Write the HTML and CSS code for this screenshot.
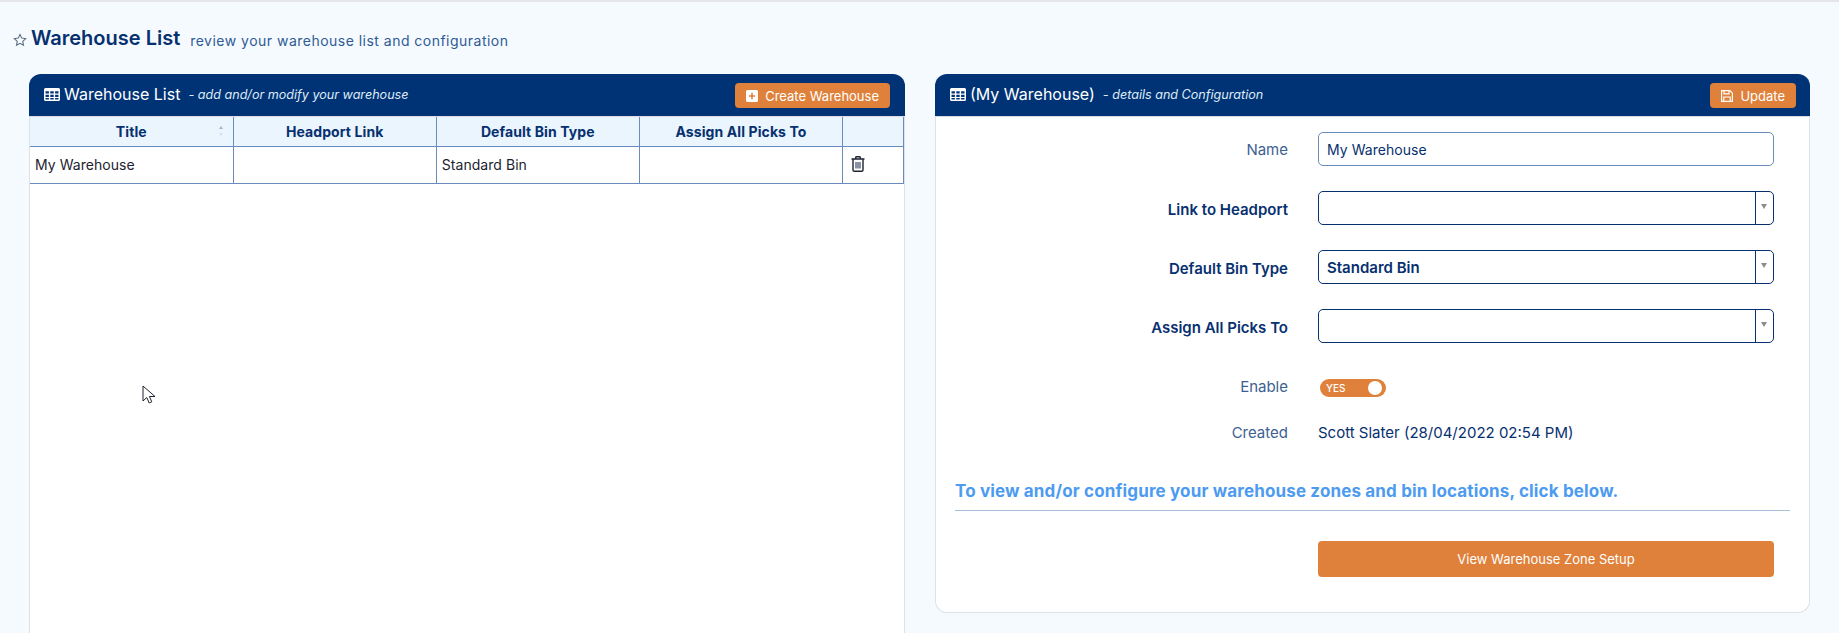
FILE: index.html
```html
<!DOCTYPE html>
<html lang="en">
<head>
<meta charset="utf-8">
<title>Warehouse List</title>
<link rel="stylesheet" href="styles.css">
</head>
<body>
<div class="page">
  <header class="page-head">
    <svg class="star" viewBox="0 0 24 24" aria-hidden="true"><path d="M12 2.6l2.9 6.2 6.8.8-5 4.7 1.3 6.8-6-3.4-6 3.4 1.3-6.8-5-4.7 6.8-.8z"/></svg>
    <h1>Warehouse List</h1>
    <p>review your warehouse list and configuration</p>
  </header>
  <main class="columns">
    <section class="panel panel-list">
      <div class="panel-head">
        <div class="panel-title">
          <svg class="grid-icon" viewBox="0 0 16 13" aria-hidden="true"><path fill-rule="evenodd" d="M1.5 0h13A1.5 1.5 0 0 1 16 1.5v10a1.5 1.5 0 0 1-1.5 1.5h-13A1.5 1.5 0 0 1 0 11.5v-10A1.5 1.5 0 0 1 1.5 0zM1.5 3.2v2.2h3.4V3.2zm4.8 0v2.2h3.4V3.2zm4.8 0v2.2h3.4V3.2zM1.5 6.7v2.2h3.4V6.7zm4.8 0v2.2h3.4V6.7zm4.8 0v2.2h3.4V6.7zM1.5 10.1v1.4h3.4v-1.4zm4.8 0v1.4h3.4v-1.4zm4.8 0v1.4h3.4v-1.4z"/></svg>
          <span class="title-main">Warehouse List</span>
          <em class="sub-text">- add and/or modify your warehouse</em>
        </div>
        <button class="btn" type="button">
          <svg class="btn-icon" viewBox="0 0 12 12" aria-hidden="true"><path fill-rule="evenodd" d="M1.5 0h9A1.5 1.5 0 0 1 12 1.5v9a1.5 1.5 0 0 1-1.5 1.5h-9A1.5 1.5 0 0 1 0 10.5v-9A1.5 1.5 0 0 1 1.5 0zM5.2 2.8v2.4H2.8v1.6h2.4v2.4h1.6V6.8h2.4V5.2H6.8V2.8z"/></svg>
          Create Warehouse
        </button>
      </div>
      <table class="grid">
        <thead>
          <tr>
            <th class="sortable">Title<span class="sort"></span></th>
            <th>Headport Link</th>
            <th>Default Bin Type</th>
            <th>Assign All Picks To</th>
            <th class="col-action"></th>
          </tr>
        </thead>
        <tbody>
          <tr>
            <td>My Warehouse</td>
            <td></td>
            <td>Standard Bin</td>
            <td></td>
            <td class="col-action">
              <svg class="trash" viewBox="0 0 14 16" aria-hidden="true"><path d="M.5 3h13M4.7 3V1.5A1 1 0 0 1 5.7.7h2.6a1 1 0 0 1 1 .8V3M2 3v11a1.3 1.3 0 0 0 1.3 1.3h7.4A1.3 1.3 0 0 0 12 14V3"/><path class="trash-bars" d="M5 6v6.5M7 6v6.5M9 6v6.5"/></svg>
            </td>
          </tr>
        </tbody>
      </table>
      <svg class="cursor" viewBox="0 0 14 20" aria-hidden="true"><path d="M1 1v15l3.8-3.5 2.4 5.5 2.6-1.2-2.4-5.3H13z"/></svg>
    </section>

    <section class="panel panel-detail">
      <div class="panel-head">
        <div class="panel-title">
          <svg class="grid-icon" viewBox="0 0 16 13" aria-hidden="true"><path fill-rule="evenodd" d="M1.5 0h13A1.5 1.5 0 0 1 16 1.5v10a1.5 1.5 0 0 1-1.5 1.5h-13A1.5 1.5 0 0 1 0 11.5v-10A1.5 1.5 0 0 1 1.5 0zM1.5 3.2v2.2h3.4V3.2zm4.8 0v2.2h3.4V3.2zm4.8 0v2.2h3.4V3.2zM1.5 6.7v2.2h3.4V6.7zm4.8 0v2.2h3.4V6.7zm4.8 0v2.2h3.4V6.7zM1.5 10.1v1.4h3.4v-1.4zm4.8 0v1.4h3.4v-1.4zm4.8 0v1.4h3.4v-1.4z"/></svg>
          <span class="title-main">(My Warehouse)</span>
          <em class="sub-text">- details and Configuration</em>
        </div>
        <button class="btn" type="button">
          <svg class="btn-icon save" viewBox="0 0 12 12" aria-hidden="true"><path d="M.6.6h8.2l2.6 2.6v8.2H.6zM3 .6v3.2h5V.6M2.8 11.4V7h6.4v4.4"/></svg>
          Update
        </button>
      </div>
      <div class="panel-body">
        <div class="form-row">
          <label class="form-label name-label">Name</label>
          <div class="control input-box">My Warehouse</div>
        </div>
        <div class="form-row">
          <label class="form-label strong">Link to Headport</label>
          <div class="control select-box"><span class="select-value"></span><span class="select-arrow"></span></div>
        </div>
        <div class="form-row">
          <label class="form-label strong">Default Bin Type</label>
          <div class="control select-box"><span class="select-value">Standard Bin</span><span class="select-arrow"></span></div>
        </div>
        <div class="form-row">
          <label class="form-label strong">Assign All Picks To</label>
          <div class="control select-box"><span class="select-value"></span><span class="select-arrow"></span></div>
        </div>
        <div class="form-row enable-row">
          <label class="form-label">Enable</label>
          <div class="toggle"><span class="toggle-text">YES</span><span class="toggle-knob"></span></div>
        </div>
        <div class="form-row created-row">
          <label class="form-label">Created</label>
          <div class="created-value">Scott Slater (28/04/2022 02:54 PM)</div>
        </div>
        <h2 class="section-title">To view and/or configure your warehouse zones and bin locations, click below.</h2>
        <div class="form-row action-row">
          <span class="form-label"></span>
          <button class="btn-wide" type="button">View Warehouse Zone Setup</button>
        </div>
      </div>
    </section>
  </main>
</div>
</body>
</html>
```

FILE: styles.css
```css
* { box-sizing: border-box; }
html, body { margin: 0; padding: 0; height: 100%; overflow: hidden; }
body {
  font-family: "Inter", "Liberation Sans", sans-serif;
  font-size: 14px;
  color: #1c2430;
  background: #f5faff;
}
.page {
  height: 633px;
  overflow: hidden;
  border-top: 2px solid #e4e6e9;
}
.page-head {
  display: flex;
  align-items: center;
  height: 72px;
  padding: 0 0 0 13px;
}
.star {
  width: 14px;
  height: 14px;
  margin-right: 4px;
  margin-top: 3px;
  fill: none;
  stroke: #5a6b80;
  stroke-width: 1.8;
}
.page-head h1 {
  margin: 0;
  font-size: 20px;
  font-weight: 600;
  color: #07306f;
}
.page-head p {
  margin: 4px 0 0 10px;
  font-size: 14px;
  letter-spacing: .48px;
  color: #2f5b94;
}
.columns {
  display: grid;
  grid-template-columns: 876px 875px;
  gap: 30px;
  padding-left: 29px;
}
.panel {
  position: relative;
  background: #fff;
  border: 1px solid #dde2e8;
  border-top: 0;
  border-radius: 12px;
}
.panel-list { height: 640px; }
.panel-detail { align-self: start; }
.panel-head {
  display: flex;
  align-items: center;
  justify-content: space-between;
  height: 43px;
  margin: 0 -1px;
  padding: 0 15px;
  background: #003375;
  border-radius: 12px 12px 0 0;
  border-bottom: 1px solid #d9dde3;
  color: #fff;
}
.panel-detail .panel-head { padding-right: 14px; }
.panel-title { display: flex; align-items: center; margin-top: -2px; }
.grid-icon { width: 16px; height: 13px; margin-right: 4px; fill: #fff; }
.title-main { font-size: 16px; }
.sub-text { margin-left: 8px; font-size: 12.6px; color: #dfeaf7; }
.btn {
  display: flex;
  align-items: center;
  height: 25px;
  margin-top: 1px;
  padding: 0 11px;
  border: 0;
  border-radius: 4px;
  background: #df813a;
  color: #fff;
  font: 13px "Inter", "Liberation Sans", sans-serif;
}
.btn-icon { width: 12px; height: 12px; margin-right: 7px; fill: #fff; }
.btn-icon.save { fill: none; stroke: #fff; stroke-width: 1.2; }
.grid {
  width: 874px;
  border-collapse: collapse;
  table-layout: fixed;
}
.grid th, .grid td {
  border: 1px solid #6a8cbc;
  overflow: hidden;
}
.grid thead th { border-top: 0; }
.grid tr > :first-child { border-left: 0; }
.grid th {
  height: 29px;
  background: #eaf5fe;
  color: #07306f;
  font-size: 14px;
  font-weight: 700;
  letter-spacing: .1px;
  text-align: center;
}
.grid td {
  height: 37px;
  padding: 0 5px 1px;
  color: #1c2430;
  letter-spacing: .05px;
}
.grid .col-action { width: 61px; }
.sortable { position: relative; }
.sort {
  position: absolute;
  right: 8px;
  top: 11px;
  width: 7px;
  height: 8px;
}
.sort::before, .sort::after {
  content: "";
  position: absolute;
  left: 1px;
  border: 2.5px solid transparent;
}
.sort::before { top: -2px; border-bottom: 3px solid #9db5d2; border-top: 0; }
.sort::after { bottom: 0; border-top: 3px solid #d4e1ef; border-bottom: 0; }
.grid td.col-action { padding-left: 8px; }
.trash {
  display: block;
  width: 14px;
  height: 16px;
  margin-top: -1px;
  fill: none;
  stroke: #1c2430;
  stroke-width: 1.4;
}
.trash-bars { stroke: #3b4a6b; stroke-width: 1.2; }
.cursor {
  position: absolute;
  left: 112px;
  top: 311px;
  width: 14px;
  height: 20px;
  fill: #fff;
  stroke: #1c2430;
  stroke-width: 1;
}
.panel-body { padding: 15px 25px 35px 21px; font-size: 15px; }
.form-row {
  display: flex;
  align-items: center;
  margin-bottom: 25px;
}
.form-label {
  flex: 0 0 331px;
  margin-right: 30px;
  text-align: right;
  color: #3d5f92;
}
.name-label { padding-top: 1px; }
.form-label.strong { padding-top: 2px; color: #07306f; font-weight: 600; }
.control {
  width: 456px;
  height: 34px;
  border-radius: 5px;
  display: flex;
  align-items: center;
  background: #fff;
}
.input-box {
  padding-left: 8px;
  border: 1px solid #6a8cbc;
  color: #07306f;
  font-size: 14px;
  letter-spacing: .05px;
}
.select-box { border: 1px solid #07306f; }
.select-value {
  flex: 1;
  padding: 1px 0 0 8px;
  color: #07306f;
  font-weight: 600;
}
.select-arrow {
  position: relative;
  width: 18px;
  height: 100%;
  border-left: 1px solid #07306f;
}
.select-arrow::after {
  content: "";
  position: absolute;
  left: 5px;
  top: 12px;
  border: 3.5px solid transparent;
  border-top: 5px solid #8d8d8d;
  border-bottom: 0;
}
.enable-row { margin-top: 36px; margin-bottom: 0; align-items: flex-start; height: 18px; }
.enable-row .form-label { margin-top: -2px; }
.toggle {
  position: relative;
  display: flex;
  align-items: center;
  width: 66px;
  height: 18px;
  margin-left: 2px;
  border-radius: 9px;
  background: #df813a;
  color: #fff;
}
.toggle-text { padding-left: 6px; font-size: 10px; font-weight: 500; }
.toggle-knob {
  position: absolute;
  right: 4px;
  top: 2px;
  width: 14px;
  height: 14px;
  border-radius: 50%;
  background: #fff;
}
.created-row { margin-top: 26px; margin-bottom: 0; }
.created-value { color: #07306f; }
.section-title {
  margin: 39px -6px 0 -2px;
  padding-bottom: 9px;
  border-bottom: 1px solid #a9bfd9;
  font-size: 17px;
  font-weight: 700;
  letter-spacing: .15px;
  color: #4d9bf0;
}
.action-row { margin-top: 30px; margin-bottom: 0; }
.btn-wide {
  width: 456px;
  height: 36px;
  border: 0;
  border-radius: 4px;
  background: #df813a;
  color: #fff;
  font: 13px "Inter", "Liberation Sans", sans-serif;
}
```
